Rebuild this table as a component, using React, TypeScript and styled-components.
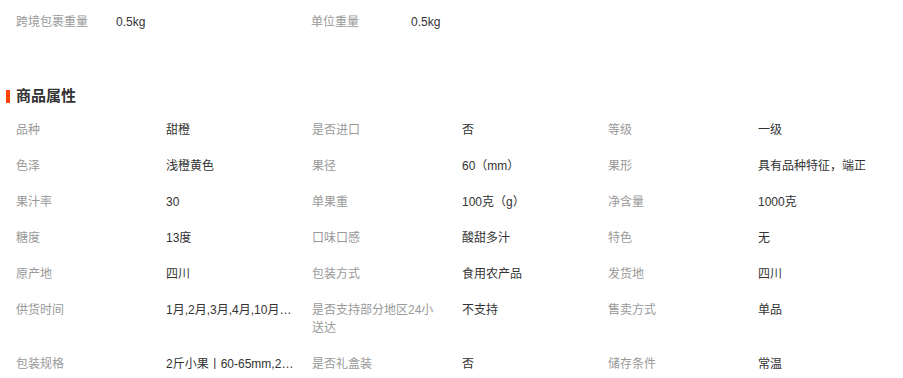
import React from "react";
import styled, {createGlobalStyle} from "styled-components";

type Attr = {label: string, value: string}

const topAttrs: Array<Attr> = [
	{label: "跨境包裹重量", value: "0.5kg"},
	{label: "单位重量", value: "0.5kg"},
]

const attrs: Array<Attr> = [
	{label: "品种", value: "甜橙"},
	{label: "是否进口", value: "否"},
	{label: "等级", value: "一级"},
	{label: "色泽", value: "浅橙黄色"},
	{label: "果径", value: "60（mm）"},
	{label: "果形", value: "具有品种特征，端正"},
	{label: "果汁率", value: "30"},
	{label: "单果重", value: "100克（g）"},
	{label: "净含量", value: "1000克"},
	{label: "糖度", value: "13度"},
	{label: "口味口感", value: "酸甜多汁"},
	{label: "特色", value: "无"},
	{label: "原产地", value: "四川"},
	{label: "包装方式", value: "食用农产品"},
	{label: "发货地", value: "四川"},
	{label: "供货时间", value: "1月,2月,3月,4月,10月,11月,12月"},
	{label: "是否支持部分地区24小送达", value: "不支持"},
	{label: "售卖方式", value: "单品"},
	{label: "包装规格", value: "2斤小果丨60-65mm,2斤中果丨65-70mm"},
	{label: "是否礼盒装", value: "否"},
	{label: "储存条件", value: "常温"},
]

export default function App() {
	return (
		<>
			<GlobalStyle/>
			<Page>
				<TopRow>
					{topAttrs.map((a, i) => (
						<TopPair key={i}>
							<TopLabel>{a.label}</TopLabel>
							<TopValue>{a.value}</TopValue>
						</TopPair>
					))}
				</TopRow>
				<SectionTitle>
					<Bar/>
					商品属性
				</SectionTitle>
				<AttrGrid>
					{attrs.map((a, i) => (
						<React.Fragment key={i}>
							<Label>{a.label}</Label>
							<Value>{a.value}</Value>
						</React.Fragment>
					))}
				</AttrGrid>
			</Page>
		</>
	)
}

const GlobalStyle = createGlobalStyle`
  body {
    margin: 0;
    background: #fff;
    font-family: "Liberation Sans", "Noto Sans CJK SC", sans-serif;
  }
`
const Page = styled.div`
  width: 903px;
  font-size: 12px;
  line-height: 18px;
`
const TopRow = styled.div`
  display: flex;
  padding: 13px 0 0 16px;
`
const TopPair = styled.div`
  display: flex;
  width: 295px;
`
const TopLabel = styled.div`
  width: 100px;
  color: #999;
`
const TopValue = styled.div`
  color: #333;
`
const SectionTitle = styled.h3`
  display: flex;
  align-items: center;
  gap: 6px;
  margin: 55px 0 6px;
  padding-left: 6px;
  font-size: 15px;
  line-height: 20px;
  font-weight: bold;
  color: #333;
`
const Bar = styled.span`
  width: 4px;
  height: 13px;
  background: #ff4400;
`
const AttrGrid = styled.div`
  display: grid;
  grid-template-columns: repeat(3, 150px 146px);
  padding-left: 16px;
`
const Label = styled.div`
  padding: 9px 20px 9px 0;
  color: #999;
`
const Value = styled.div`
  padding: 9px 18px 9px 0;
  color: #333;
  white-space: nowrap;
  overflow: hidden;
  text-overflow: ellipsis;
`
